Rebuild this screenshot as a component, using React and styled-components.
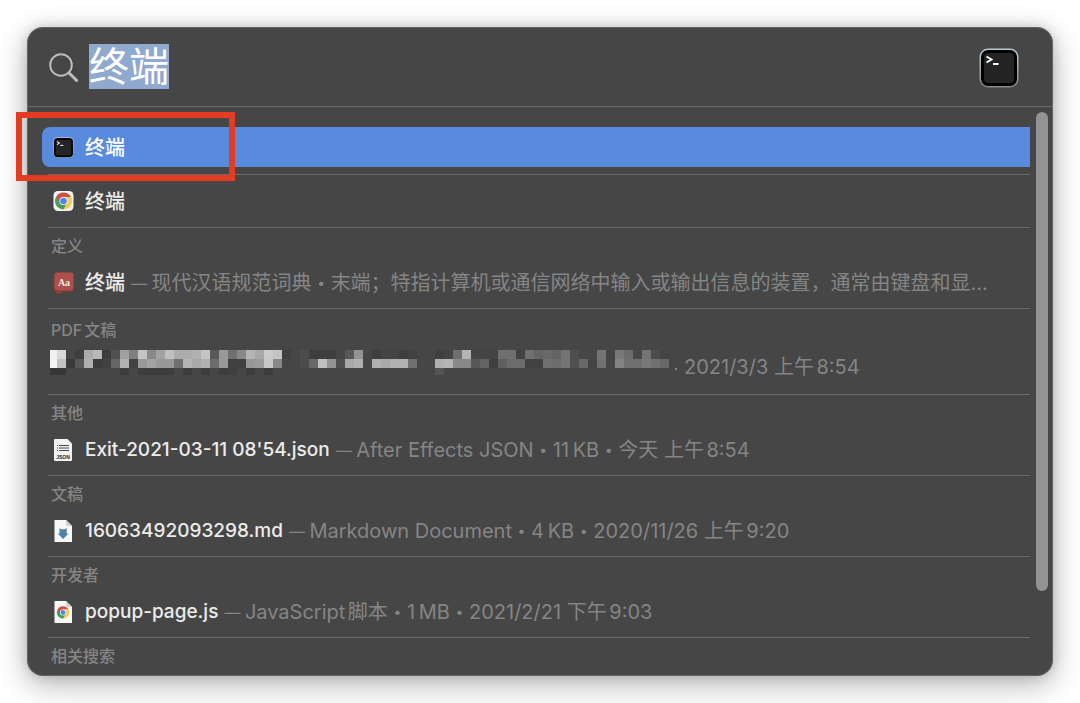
import React, { useState } from "react";
import styled, { createGlobalStyle, css } from "styled-components";

const GlobalStyle = createGlobalStyle`
  * { box-sizing: border-box; }
  body {
    margin: 0;
    background: #fff;
    font-family: Inter, "Noto Sans CJK SC", sans-serif;
    text-autospace: normal;
  }
`;

const Page = styled.div`
  position: relative;
  padding: 27px;
  overflow: hidden;
`;

const Panel = styled.main`
  overflow: hidden;
  border-radius: 16px;
  background: #464646;
  box-shadow: 0 8px 30px rgba(0, 0, 0, 0.3), 0 0 12px rgba(0, 0, 0, 0.14);
  position: relative;

  &::after {
    content: "";
    position: absolute;
    inset: 0;
    border: 1px solid rgba(255, 255, 255, 0.16);
    border-radius: 16px;
    pointer-events: none;
  }
`;

const SearchBar = styled.form`
  display: flex;
  align-items: center;
  gap: 10px;
  height: 80px;
  padding: 2px 34px 0 21px;
  border-bottom: 1px solid #6b6b6b;

  svg {
    flex: none;
  }
`;

const SearchField = styled.label`
  flex: 1;
  display: flex;
  height: 47px;
`;

const SearchInput = styled.input`
  field-sizing: content;
  height: 45px;
  padding: 0;
  border: 0;
  outline: 0;
  background: #8fa9cf;
  color: #fff;
  font: 400 40px/45px Inter, "Noto Sans CJK SC", sans-serif;
`;

const Body = styled.div`
  display: flex;
  gap: 6px;
  padding: 0 5px 0 15px;
`;

const Results = styled.div`
  flex: 1;
  min-width: 0;
  padding-top: 20px;
`;

const Track = styled.div`
  width: 12px;
  padding-top: 5px;
`;

const Thumb = styled.div`
  height: 85%;
  border-radius: 6px;
  background: #939393;
`;

const Section = styled.section`
  margin-left: 6px;
  ${(p) =>
    !p.$first &&
    css`
      border-top: 1px solid #6b6b6b;
      padding-top: ${p.$roomy ? 10 : p.$titled ? 7 : 6}px;
    `}
  padding-bottom: ${(p) => (p.$first || p.$roomy ? 7 : p.$titled ? 5 : 6)}px;
`;

const Title = styled.h2`
  margin: 0 0 6px;
  padding-left: 3px;
  color: #858585;
  font-size: 16px;
  font-weight: 500;
  line-height: 22px;
`;

const LastTitle = styled(Title)`
  margin-bottom: 4px;
`;

const Row = styled.button`
  display: flex;
  align-items: center;
  width: calc(100% + 6px);
  height: 40px;
  margin-left: -6px;
  padding: 0 24px 0 11px;
  border: 0;
  border-radius: 8px 0 0 8px;
  background: ${(p) => (p.$selected ? "#588ade" : "transparent")};
  font: inherit;
  font-size: 20px;
  line-height: 28px;
  text-align: left;
  white-space: nowrap;

  svg {
    flex: none;
  }
`;

const Name = styled.span`
  padding-left: 11px;
  padding-top: ${(p) => (p.$plain ? 2 : 0)}px;
  color: ${(p) => (p.$selected ? "#fff" : "#ececec")};
  font-size: ${(p) => (p.$file ? 19 : 20)}px;
  font-weight: 500;
`;

const Detail = styled.span`
  padding-left: 6px;
  min-width: 0;
  overflow: hidden;
  text-overflow: ellipsis;
  color: #858585;
`;

const Dash = styled.span`
  font-size: 16px;
  line-height: 1;
  vertical-align: 1px;
`;

const Bullet = styled.span`
  font-size: 14px;
  line-height: 1;
  vertical-align: 2px;
`;

const Highlight = styled.div`
  position: absolute;
  left: 16px;
  top: 112px;
  width: 219px;
  height: 69px;
  border: 6px solid #e43c22;
  pointer-events: none;
`;

function SearchIcon() {
  return (
    <svg width="31" height="31" viewBox="0 0 31 31" fill="none" stroke="#bcbcbc" aria-hidden="true">
      <circle cx="13" cy="13" r="10.8" strokeWidth="2" />
      <path d="M20.8 20.8L28.6 28.4" strokeWidth="3" strokeLinecap="round" />
    </svg>
  );
}

function TerminalIcon({ size }) {
  return (
    <svg width={size} height={size} viewBox="0 0 40 40" aria-hidden="true">
      <defs>
        <linearGradient id="bezel" x1="0" y1="0" x2="0" y2="1">
          <stop offset="0" stopColor="#b9cbd6" />
          <stop offset="1" stopColor="#858585" />
        </linearGradient>
      </defs>
      <rect x="0.5" y="0.5" width="39" height="39" rx="8.5" fill="url(#bezel)" />
      <rect x="2" y="2" width="36" height="36" rx="7" fill="#000" />
      <rect x="5" y="5" width="30" height="30" rx="4" fill="#242424" />
      <path d="M7.5 8.5L12.5 11.5L7.5 14.5M14 16H19.5" fill="none" stroke="#fff" strokeWidth="1.9" />
    </svg>
  );
}

function ChromeMark() {
  return (
    <g>
      <path d="M0 0L7.36 -4.25A8.5 8.5 0 0 1 0 8.5Z" fill="#f3cb55" />
      <path d="M0 0L0 8.5A8.5 8.5 0 0 1 -7.36 -4.25Z" fill="#4a9c5b" />
      <path d="M-7.36 -4.25L-3.5 2L0 -4H7.5A8.5 8.5 0 0 0 -7.36 -4.25Z" fill="#cf4e42" />
      <path d="M0 -4H7.5L3.6 2Z" fill="#f3cb55" />
      <path d="M3.5 2L-0.2 8.5L-3.5 2Z" fill="#4a9c5b" />
      <circle r="4.1" fill="#fff" />
      <circle r="3.3" fill="#4c86ec" />
    </g>
  );
}

function ChromeIcon() {
  return (
    <svg width="21" height="20" viewBox="0 0 21 20" aria-hidden="true">
      <rect x="0.5" width="20" height="20" rx="4.5" fill="#f3f3f1" />
      <g transform="translate(10.5 10)">
        <ChromeMark />
      </g>
    </svg>
  );
}

function DictionaryIcon() {
  return (
    <svg width="21" height="22" viewBox="0 0 21 22" aria-hidden="true">
      <path d="M3 19H8V21.6L6.7 20.6L5.6 21.6L4.4 20.6L3.4 21.6Z" fill="#c93c38" />
      <rect x="0.5" y="0.5" width="20" height="19.5" rx="3.5" fill="#853632" />
      <rect x="1.5" y="0.5" width="19" height="18" rx="3" fill="#aa504d" />
      <text x="11" y="14" textAnchor="middle" fontFamily="Liberation Serif, serif" fontWeight="700" fontSize="10" fill="#f5e9e7">
        Aa
      </text>
    </svg>
  );
}

function FileIcon({ children }) {
  return (
    <svg width="21" height="22" viewBox="0 0 21 22" aria-hidden="true">
      <path d="M1.5 0H13L19 6V22H1.5Z" fill="#f7f7f7" />
      <path d="M13 0V4.5Q13 6 14.5 6H19Z" fill="#d2d2d2" />
      {children}
    </svg>
  );
}

function JsonIcon() {
  return (
    <svg width="21" height="22" viewBox="0 0 21 22" aria-hidden="true">
      <path d="M2 0H14.5L19 4.5V21Q19 22 18 22H2Q1 22 1 21V1Q1 0 2 0Z" fill="#f3f3f3" />
      <path d="M4 6.5H5M6 6.5H16M4 9H5M6 9H16M4 11.5H5M6 11.5H16" stroke="#484848" strokeWidth="1" />
      <text x="10" y="19.5" textAnchor="middle" fontFamily="Liberation Sans, sans-serif" fontWeight="700" fontSize="5" fill="#222">
        JSON
      </text>
    </svg>
  );
}

function MarkdownIcon() {
  return (
    <FileIcon>
      <path d="M6.5 8L8.3 9.3H11.9L13.7 8V13.5H15.5L10.1 19L4.7 13.5H6.5Z" fill="#4f83a5" />
    </FileIcon>
  );
}

function ScriptIcon() {
  return (
    <FileIcon>
      <g transform="translate(10 11.5) scale(0.73)">
        <ChromeMark />
      </g>
    </FileIcon>
  );
}

// Grey levels of the blurred-out file name, one hex pair per 9px block.
const MOSAIC = [
  "f0 d9 46 3e aa b8 3d 50 a0 80 c4 88 a2 c0 ac ac b0 c4 58 98 70 88 b4 a8 cc c4 40 46 4c 3e 3e 3e 46 58 94 46 3e 44 44 3e 42 46 46 40 44 70 b4 44 44 44 70 70 42 70 64 68 64 74 4e 46 46 74 44 78 6c 48 74 4c 44",
  "f4 c2 3a 58 b0 3c 40 66 b0 42 98 a2 98 98 70 b4 a8 b0 6c 98 40 40 98 9c c8 88 46 46 4c 68 c0 94 50 a8 b0 46 b0 a8 b0 b0 70 46 46 b0 b4 88 88 58 64 40 60 6c 6c 42 42 70 6c 74 50 68 44 70 46 84 70 70 78 70 68",
  "36 36 46 46 46 46 46 46 3d 46 3d 3d 3d 3d 46 3d 46 3d 46 3d 40 46 3d 46 3d 46 46 46 46 46 46 46 46 46 46 46 46 46 46 46 46 46 46 54",
].map((line) => line.split(" "));

function Mosaic() {
  return (
    <svg width="627" height="27" viewBox="2 0 627 27" shapeRendering="crispEdges" aria-hidden="true">
      {MOSAIC.map((line, r) =>
        line.map((v, i) => (
          <rect key={`${r}-${i}`} x={i * 9} y={r * 9} width="9" height={r === 2 ? 7 : 9} fill={`#${v}${v}${v}`} />
        ))
      )}
      <rect x="627" y="18" width="2" height="2" fill="#858585" />
    </svg>
  );
}

const PdfRow = styled(Row)`
  padding-left: 8px;

  svg {
    margin-bottom: 8px;
  }
`;

const PdfDate = styled(Detail)`
  padding-left: 7px;
`;

const SECTIONS = [
  { id: "app", name: "终端", icon: <TerminalIcon size={21} />, selected: true },
  { id: "chrome", name: "终端", icon: <ChromeIcon /> },
  {
    id: "definition",
    title: "定义",
    name: "终端",
    detail: ["现代汉语规范词典", "末端；特指计算机或通信网络中输入或输出信息的装置，通常由键盘和显…"],
    icon: <DictionaryIcon />,
  },
  { id: "pdf", title: "PDF文稿", date: "2021/3/3 上午8:54" },
  {
    id: "other",
    title: "其他",
    name: "Exit-2021-03-11 08'54.json",
    file: true,
    detail: ["After Effects JSON", "11\u2009KB", "今天 上午8:54"],
    icon: <JsonIcon />,
  },
  {
    id: "docs",
    title: "文稿",
    name: "16063492093298.md",
    file: true,
    detail: ["Markdown Document", "4\u2009KB", "2020/11/26 上午9:20"],
    icon: <MarkdownIcon />,
  },
  {
    id: "dev",
    title: "开发者",
    name: "popup-page.js",
    file: true,
    detail: ["JavaScript脚本", "1\u2009MB", "2021/2/21 下午9:03"],
    icon: <ScriptIcon />,
  },
];

function DetailText({ parts }) {
  return (
    <Detail>
      <Dash>— </Dash>
      {parts.map((part, i) => (
        <React.Fragment key={part}>
          {i > 0 && (
            <>
              {" "}
              <Bullet>•</Bullet>{" "}
            </>
          )}
          {part}
        </React.Fragment>
      ))}
    </Detail>
  );
}

export default function App() {
  const [query, setQuery] = useState("终端");
  return (
    <>
      <GlobalStyle />
      <Page>
        <Panel>
          <SearchBar onSubmit={(e) => e.preventDefault()}>
            <SearchIcon />
            <SearchField>
              <SearchInput aria-label="搜索" value={query} onChange={(e) => setQuery(e.target.value)} />
            </SearchField>
            <TerminalIcon size={40} />
          </SearchBar>
          <Body>
            <Results>
              {SECTIONS.map((s, i) => (
                <Section key={s.id} $first={i === 0} $titled={!!s.title} $roomy={!!s.date}>
                  {s.title && <Title>{s.title}</Title>}
                  {s.date ? (
                    <PdfRow type="button">
                      <Mosaic />
                      <PdfDate>{s.date}</PdfDate>
                    </PdfRow>
                  ) : (
                    <Row type="button" $selected={s.selected}>
                      {s.icon}
                      <Name $selected={s.selected} $plain={!s.title} $file={s.file}>
                        {s.name}
                      </Name>
                      {s.detail && <DetailText parts={s.detail} />}
                    </Row>
                  )}
                </Section>
              ))}
              <Section $titled>
                <LastTitle>相关搜索</LastTitle>
              </Section>
            </Results>
            <Track aria-hidden="true">
              <Thumb />
            </Track>
          </Body>
        </Panel>
        <Highlight />
      </Page>
    </>
  );
}
